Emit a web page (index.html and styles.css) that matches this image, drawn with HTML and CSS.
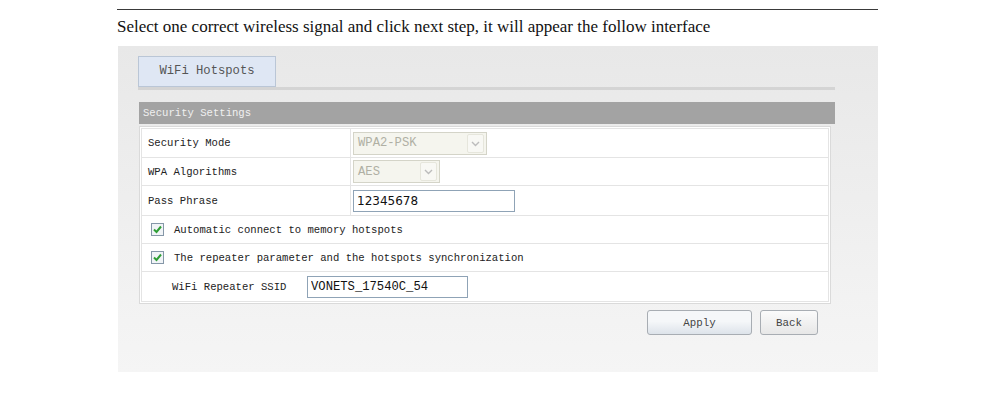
FILE: index.html
```html
<!DOCTYPE html>
<html lang="en">
<head>
    <meta charset="UTF-8">
    <title>WiFi Hotspots</title>
    <link rel="stylesheet" href="styles.css">
</head>
<body>
<div class="page">
    <div class="rule"></div>
    <p class="intro">Select one correct wireless signal and click next step, it will appear the follow interface</p>

    <div class="panel">
        <div class="tabs">
            <div class="tab">WiFi Hotspots</div>
        </div>

        <div class="section-title">Security Settings</div>

        <div class="form">
            <div class="rows">
                <div class="row row-first">
                    <div class="label">Security Mode</div>
                    <div class="field">
                        <div class="select select-wide">
                            <span class="value">WPA2-PSK</span>
                            <span class="arrow"><svg width="15" height="17" viewBox="0 0 15 17"><path d="M4 7 L7.5 10.5 L11 7" fill="none" stroke="#bcbcbc" stroke-width="1.4"/></svg></span>
                        </div>
                    </div>
                </div>
                <div class="row row-short">
                    <div class="label">WPA Algorithms</div>
                    <div class="field">
                        <div class="select select-short">
                            <span class="value">AES</span>
                            <span class="arrow"><svg width="15" height="17" viewBox="0 0 15 17"><path d="M4 7 L7.5 10.5 L11 7" fill="none" stroke="#bcbcbc" stroke-width="1.4"/></svg></span>
                        </div>
                    </div>
                </div>
                <div class="row row-tall">
                    <div class="label">Pass Phrase</div>
                    <div class="field">
                        <input class="text-input pass" type="text" value="12345678">
                    </div>
                </div>
                <div class="row row-short row-check">
                    <svg class="check" width="13" height="13" viewBox="0 0 13 13"><rect x="0.5" y="0.5" width="12" height="12" fill="#f1f4f7" stroke="#8597a8"/><path d="M3 6.5 L5.5 9 L10 3.5" fill="none" stroke="#2f9e35" stroke-width="2"/></svg>
                    <span>Automatic connect to memory hotspots</span>
                </div>
                <div class="row row-short row-check">
                    <svg class="check" width="13" height="13" viewBox="0 0 13 13"><rect x="0.5" y="0.5" width="12" height="12" fill="#f1f4f7" stroke="#8597a8"/><path d="M3 6.5 L5.5 9 L10 3.5" fill="none" stroke="#2f9e35" stroke-width="2"/></svg>
                    <span>The repeater parameter and the hotspots synchronization</span>
                </div>
                <div class="row row-tall row-ssid">
                    <span class="ssid-label">WiFi Repeater SSID</span>
                    <input class="text-input ssid" type="text" value="VONETS_17540C_54">
                </div>
            </div>
        </div>

        <div class="actions">
            <button class="btn btn-apply">Apply</button>
            <button class="btn btn-back">Back</button>
        </div>
    </div>
</div>
</body>
</html>
```

FILE: styles.css
```css
body{
    margin: 0;
    background-color: #fff;
    font-family: "Liberation Serif", serif;
}
.page{
    width: 761px;
    margin-left: 117px;
    padding-top: 9px;
}
.rule{
    border-top: 1px solid #3a3a3a;
}
.intro{
    margin: 7px 0 9px;
    font-size: 17px;
    line-height: 20px;
    color: #111;
}

/* grey box with the router page */
.panel{
    margin-left: 1px;
    height: 326px;
    box-sizing: border-box;
    padding: 10px 43px 0 20px;
    background: linear-gradient(#e8e8e8, #f5f5f5);
    font-family: "Liberation Mono", monospace;
    font-size: 10.6px;
    color: #222;
}
.tabs{
    height: 31px;
    border-bottom: 3px solid #d4d4d4;
}
.tab{
    width: 136px;
    height: 29px;
    line-height: 29px;
    border: 1px solid #bac6d6;
    background-color: #dfe7f4;
    color: #555;
    font-size: 12.2px;
    text-align: center;
}
.section-title{
    margin: 12px 0 0 1px;
    height: 22px;
    line-height: 22px;
    padding-left: 4px;
    background-color: #a3a3a3;
    color: #f0f0f0;
}
.form{
    margin: 2px 4px 0 1px;
    border: 1px solid #dadada;
    padding: 1px;
    background-color: #fff;
}
.rows{
    border: 1px solid #e4e4e4;
}
.row{
    display: flex;
    align-items: center;
    height: 28px;
}
.row-short{
    height: 27px;
}
.row-tall{
    height: 29px;
}
.row + .row{
    border-top: 1px solid #e4e4e4;
}
.label{
    width: 202px;
    height: 100%;
    padding-left: 6px;
    display: flex;
    align-items: center;
    border-right: 1px solid #e4e4e4;
}
.field{
    padding-left: 2px;
    display: flex;
    align-items: center;
}

/* disabled selects */
.select{
    display: flex;
    align-items: center;
    justify-content: space-between;
    box-sizing: border-box;
    height: 23px;
    padding: 0 2px 0 4px;
    border: 1px solid #d4d4c8;
    background-color: #f5f5ee;
    color: #b0b0a4;
    font-size: 12.2px;
}
.select-wide{
    width: 134px;
}
.select-short{
    width: 87px;
}
.select .arrow{
    display: flex;
    border: 1px solid #e6e6dc;
    border-radius: 2px;
    background-color: #f8f8f4;
}

.text-input{
    box-sizing: border-box;
    height: 22px;
    padding: 0 3px;
    margin: 0;
    border: 1px solid #8fa3b6;
    background-color: #fff;
    color: #111;
    outline: none;
}
.pass{
    width: 162px;
    font-family: "DejaVu Sans", sans-serif;
    font-size: 12px;
}
.ssid{
    width: 161px;
    font-family: "Liberation Mono", monospace;
    font-size: 12.2px;
}

.row-check{
    padding-left: 9px;
}
.row-check .check{
    margin-right: 10px;
}
.row-ssid{
    padding-left: 30px;
}
.ssid-label{
    width: 135px;
}

.actions{
    display: flex;
    justify-content: flex-end;
    gap: 8px;
    margin: 6px 17px 0 0;
}
.btn{
    height: 25px;
    padding: 0;
    border: 1px solid #a8adb3;
    border-radius: 3px;
    background: linear-gradient(#fbfbfb, #e7e7e7);
    color: #444;
    font-family: "Liberation Mono", monospace;
    font-size: 10.8px;
}
.btn-apply{
    width: 105px;
    background: linear-gradient(#f5f7f9 45%, #dde3ea);
}
.btn-back{
    width: 58px;
}
```
